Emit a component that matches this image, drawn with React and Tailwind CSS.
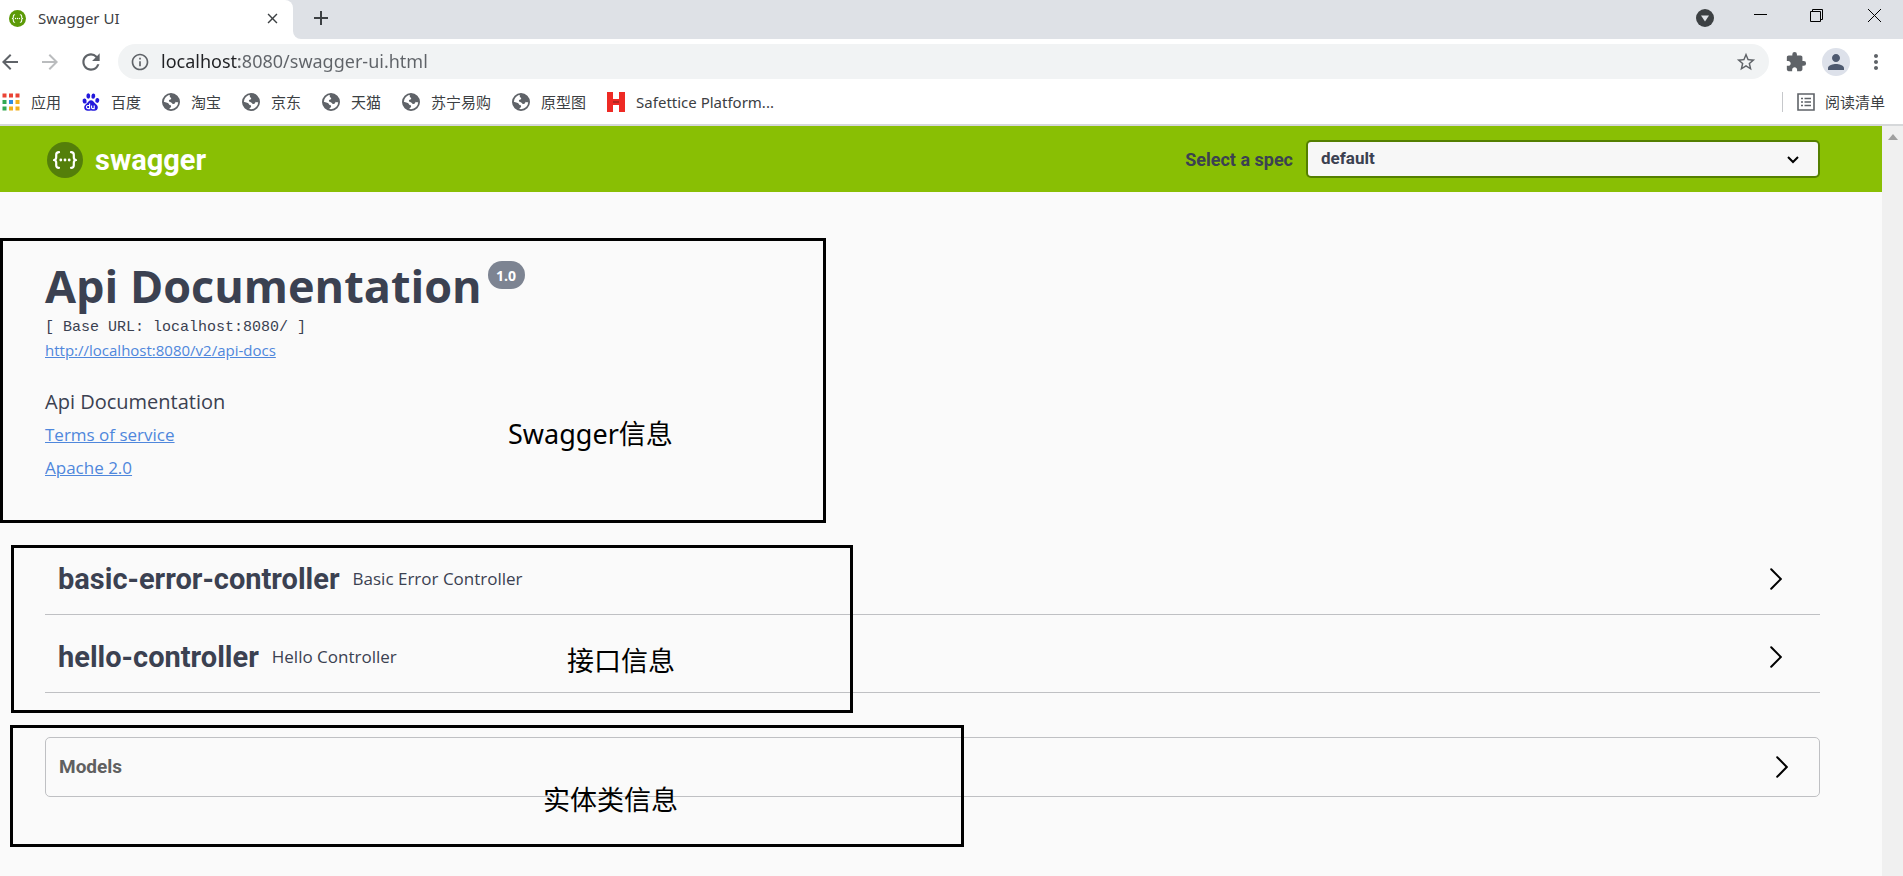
import React from "react";
import {
  MdExtension, MdPerson, MdMoreVert, MdStarBorder, MdArrowBack, MdArrowForward, MdRefresh, MdInfoOutline, MdAdd, MdClose,
} from "react-icons/md";

function Braces({ className, disc }) {
  return (
    <svg viewBox="0 0 36 36" className={className} fill="none" aria-hidden="true">
      <circle cx="18" cy="18" r="18" fill={disc} />
      <g stroke="#fff" strokeWidth="2.2" strokeLinecap="round" strokeLinejoin="round">
        <path d="M12 10.2c-2.2 0-2.8.9-2.8 2.6v2.4c0 1.7-.7 2.6-2.2 2.8 1.5.2 2.2 1.1 2.2 2.8v2.4c0 1.7.6 2.6 2.8 2.6" />
        <path d="M24 10.2c2.2 0 2.8.9 2.8 2.6v2.4c0 1.7.7 2.6 2.2 2.8-1.5.2-2.2 1.1-2.2 2.8v2.4c0 1.7-.6 2.6-2.8 2.6" />
      </g>
      <g fill="#fff"><circle cx="13.8" cy="18" r="1.4" /><circle cx="18" cy="18" r="1.4" /><circle cx="22.2" cy="18" r="1.4" /></g>
    </svg>
  );
}

function Globe() {
  return (
    <svg viewBox="0 0 18 18" className="size-[18px]" aria-hidden="true">
      <circle cx="9" cy="9" r="8.1" fill="#fff" stroke="#5f6368" strokeWidth="1.8" />
      <path fill="#5f6368" d="M8.500 1C13 .8 16.800 4 17 8.500c-1 1.200-2.200 1-3.200.3-.8.900-.8 2.200-2.300 2.300-1.300 0-1.200-1.400-2.300-1.700C7.800 9 6.700 8.800 6.900 7.600c.2-1 1.300-.9 2-1.400.6-.5.200-1.200-.4-1.600C7.600 4 7.300 2 8.500 1z" />
      <path fill="#5f6368" d="M1 8.600c1.500.6 3.400.9 4.800 1.400 1.200.4 1 1.700 2.100 2.100 1.200.3 1.600 1.100.9 2.100-.6.9-1.800 1-1.700 2.700C3.500 16 .8 13 1 8.600z" />
    </svg>
  );
}

function Apps() {
  const colors = ["#ea4335", "#ea4335", "#ea4335", "#34a853", "#2f8de4", "#f2b01e", "#34a853", "#f2b01e", "#f2b01e"];
  return (
    <svg viewBox="0 0 18 18" className="size-[18px]" aria-hidden="true">
      {colors.map((c, i) => <rect key={i} x={(i % 3) * 6.5 + 0.5} y={Math.floor(i / 3) * 6.5 + 0.5} width="4" height="4" fill={c} />)}
    </svg>
  );
}

function Paw() {
  return (
    <svg viewBox="0 0 18 18" className="size-[18px]" fill="#2319dc" aria-hidden="true">
      <ellipse cx="2.6" cy="8" rx="2" ry="2.6" transform="rotate(-12 2.6 8)" />
      <ellipse cx="6.3" cy="3" rx="1.9" ry="2.7" />
      <ellipse cx="11.3" cy="3.1" rx="1.9" ry="2.7" transform="rotate(10 11.3 3.1)" />
      <ellipse cx="15.3" cy="7.4" rx="2" ry="2.5" transform="rotate(10 15.3 7.4)" />
      <path d="M9 7.300c2 0 2.700 1.700 4 3 1.500 1.400 3 2.400 2.800 4.500-.2 2-1.700 3-3.500 2.900-1.200 0-2-.3-3.300-.3s-2.100.3-3.300.3c-1.900 0-3.300-1-3.500-2.900-.1-2.100 1.300-3.100 2.800-4.500 1.300-1.300 2-3 4-3z" />
      <path d="M7.600 10.400v5.200H5.900c-1 0-1.500-.6-1.500-1.600s.6-1.500 1.500-1.500h1.700M9.600 12.500v2c0 .8.300 1.100 1 1.100h1.600v-3.100" fill="none" stroke="#fff" strokeWidth="1.1" />
    </svg>
  );
}

function Hikvision() {
  return (
    <svg viewBox="0 0 18 20" className="h-5 w-[18px]" aria-hidden="true">
      <path fill="#ee2a24" d="M0 0h6v7h6V0h6v20h-6v-7H6v7H0z" />
      <path fill="#b3261f" d="M6 9h6v2H6z" />
    </svg>
  );
}

function ListIcon() {
  return (
    <svg viewBox="0 0 18 18" className="size-[18px]" fill="none" stroke="#5f6368" strokeWidth="1.6" aria-hidden="true">
      <path d="M1 1h16v16H1zM4 5.500h2M4 9h2M4 12.500h2M7.500 5.500H14M7.500 9H14M7.500 12.500H14" />
    </svg>
  );
}

function Chevron() {
  return (
    <svg viewBox="0 0 12 22" className="h-[22px] w-3 shrink-0" fill="none" stroke="#000" strokeWidth="2" strokeLinecap="round" aria-hidden="true">
      <path d="M1.200 1.200 10.800 11 1.200 20.800" />
    </svg>
  );
}

const bookmarks = [
  [Apps, "应用"], [Paw, "百度"], [Globe, "淘宝"], [Globe, "京东"], [Globe, "天猫"], [Globe, "苏宁易购"], [Globe, "原型图"], [Hikvision, "Safettice Platform..."],
];

const tags = [
  ["basic-error-controller", "Basic Error Controller"],
  ["hello-controller", "Hello Controller"],
];

function BrowserChrome() {
  return (
    <header className="border-b-2 border-[#d6d8da] bg-white font-['Noto_Sans','Noto_Sans_CJK_SC',sans-serif] text-[#3c4043]">
      <div className="flex h-[39px]">
        <div className="bg-[#dee1e6]">
          <div className="flex h-[39px] w-[293px] items-center rounded-tr-lg bg-white pr-3 pb-[3px] pl-[9px]">
            <Braces className="size-[17px]" disc="#5c9a08" />
            <span className="ml-3 flex-1 text-[15px]">Swagger UI</span>
            <button type="button" aria-label="Close tab"><MdClose size={17} /></button>
          </div>
        </div>
        <div className="flex flex-1 items-start rounded-bl-lg bg-[#dee1e6] pr-[22px] pl-[16px]">
          <button type="button" aria-label="New tab" className="mt-1.5"><MdAdd size={24} /></button>
          <div className="ml-auto flex items-start text-black">
            <button type="button" aria-label="Search tabs" className="mt-[9px] mr-10">
              <svg viewBox="0 0 18 18" className="size-[18px]"><circle cx="9" cy="9" r="9" fill="#3c4043" /><path d="M5 6.500h8L9 12.500z" fill="#dee1e6" /></svg>
            </button>
            <button type="button" aria-label="Minimize" className="mt-[9px] mr-[43px]">
              <svg viewBox="0 0 13 13" className="size-[13px]" stroke="currentColor"><path d="M0 5.500h13" /></svg>
            </button>
            <button type="button" aria-label="Restore" className="mt-[9px] mr-[45px]">
              <svg viewBox="0 0 13 13" className="size-[13px]" fill="none" stroke="currentColor"><path d="M.5 2.500h10v10H.5zM2.500 2.500v-2h10v10h-2" /></svg>
            </button>
            <button type="button" aria-label="Close window" className="mt-[9px]">
              <svg viewBox="0 0 13 13" className="size-[13px]" stroke="currentColor"><path d="M0 0l13 13M13 0 0 13" /></svg>
            </button>
          </div>
        </div>
      </div>
      <div className="flex h-[45px] items-center pr-[15px] text-[#5f6368]">
        <button type="button" aria-label="Back" className="-ml-[2px]"><MdArrowBack size={24} /></button>
        <button type="button" aria-label="Forward" className="ml-4 text-[#babcbe]"><MdArrowForward size={24} /></button>
        <button type="button" aria-label="Reload" className="ml-4"><MdRefresh size={26} /></button>
        <div className="ml-[14px] flex h-[35px] flex-1 items-center rounded-full bg-[#f1f3f4] px-3">
          <MdInfoOutline size={20} />
          <input
            aria-label="Address"
            defaultValue="localhost:8080/swagger-ui.html"
            className="ml-[11px] h-7 flex-1 bg-[linear-gradient(90deg,#202124_78px,#5f6368_78px)] bg-clip-text pb-0.5 text-[18px] text-transparent caret-black outline-none"
          />
          <button type="button" aria-label="Bookmark this page"><MdStarBorder size={22} /></button>
        </div>
        <button type="button" aria-label="Extensions" className="ml-4"><MdExtension size={22} /></button>
        <button type="button" aria-label="Profile" className="ml-[15px] flex size-7 items-center justify-center rounded-full bg-[#dde1ea]"><MdPerson size={24} color="#4e5a70" /></button>
        <button type="button" aria-label="Menu" className="ml-[14px]"><MdMoreVert size={24} /></button>
      </div>
      <nav className="flex h-10 items-center pr-[18px] pb-1 pl-[2px] text-[15px]">
        <div className="flex items-center gap-[21px]">
          {bookmarks.map(([Icon, label]) => (
            <a key={label} href="#" className="flex items-center gap-[11px] whitespace-nowrap"><Icon />{label}</a>
          ))}
        </div>
        <button type="button" className="ml-auto flex h-5 items-center gap-2.5 border-l border-[#c6c8cb] pl-[14px]"><ListIcon />阅读清单</button>
      </nav>
    </header>
  );
}

function Note({ box, label, children }) {
  return (
    <div className={"pointer-events-none absolute border-[3px] border-black " + box}>
      <span className={"absolute whitespace-nowrap text-[27px] leading-9 text-black font-['Noto_Sans','Noto_Sans_CJK_SC',sans-serif] " + label}>{children}</span>
    </div>
  );
}

export default function App() {
  return (
    <div className="flex min-h-screen flex-col bg-[#fafafa] font-['Open_Sans',sans-serif] text-[#3b4151]">
      <BrowserChrome />
      <div className="flex flex-1">
        <div className="relative flex-1">
          <div className="flex h-[66px] items-center justify-between bg-[#89bf04] pr-[62px] pl-[47px] font-['Roboto',sans-serif] font-bold">
            <a href="#" className="flex items-center gap-3 pt-0.5 text-white">
              <Braces className="size-9" disc="#547f0a" />
              <span className="text-[29px] leading-9">swagger</span>
            </a>
            <div className="flex items-center">
              <label htmlFor="spec" className="mr-[13px] text-[18px]">Select a spec</label>
              <div className="relative">
                <select id="spec" className="h-[38px] w-[514px] appearance-none rounded-[5px] border-2 border-[#547f00] bg-[#f7f7f7] pr-10 pl-[13px] text-[17px] font-bold">
                  <option>default</option>
                </select>
                <svg viewBox="0 0 12 8" className="pointer-events-none absolute top-4 right-[21px] h-2 w-3" fill="none" stroke="#000" strokeWidth="2"><path d="M1 1l5 5 5-5" /></svg>
              </div>
            </div>
          </div>
          <main className="pr-[62px] pb-10 pl-[45px]">
            <section className="pt-[71px]">
              <div className="flex items-start gap-[6px]">
                <h1 className="text-[45px] leading-[45px] font-bold">Api Documentation</h1>
                <span className="-mt-0.5 flex h-7 w-[37px] items-center justify-center rounded-full bg-[#7d8492] text-[14px] font-bold text-white">1.0</span>
              </div>
              <pre className="mt-2.5 text-[15px] leading-5 font-['Liberation_Mono',monospace]">[ Base URL: localhost:8080/ ]</pre>
              <a href="#" className="mt-0.5 block w-fit text-[15px] leading-5 text-[#4f87dc] underline">http://localhost:8080/v2/api-docs</a>
              <p className="mt-7 text-[20px] leading-7">Api Documentation</p>
              <a href="#" className="mt-[7px] block w-fit text-[17px] leading-6 text-[#4f87dc] underline">Terms of service</a>
              <a href="#" className="mt-[9px] block w-fit text-[17px] leading-6 text-[#4f87dc] underline">Apache 2.0</a>
            </section>
            <section className="mt-[57px]">
              {tags.map(([name, description]) => (
                <button key={name} type="button" className="flex h-[78px] w-full items-center border-b border-[#bfc0c3] pt-[6px] pr-[38px] pl-[13px] text-left">
                  <h2 className="text-[29px] leading-10 font-bold font-['Roboto',sans-serif]">{name}</h2>
                  <span className="ml-[13px] flex-1 text-[17px]">{description}</span>
                  <Chevron />
                </button>
              ))}
            </section>
            <button type="button" className="mt-11 flex h-[60px] w-full items-center justify-between rounded-[5px] border border-[#bfc0c3] pr-[31px] pl-[13px] text-[19px] font-bold text-[#606060] font-['Roboto',sans-serif]">
              Models
              <Chevron />
            </button>
          </main>
          <Note box="top-[112px] left-0 h-[285px] w-[826px]" label="top-[175px] left-[505px]">Swagger信息</Note>
          <Note box="top-[419px] left-[11px] h-[168px] w-[842px]" label="top-[95px] left-[553px]">接口信息</Note>
          <Note box="top-[599px] left-[10px] h-[122px] w-[954px]" label="top-[54px] left-[530px]">实体类信息</Note>
        </div>
        <div className="flex w-[21px] justify-center bg-[#f0f0f0] pt-2" aria-hidden="true">
          <svg viewBox="0 0 10 6" className="h-1.5 w-2.5"><path d="M5 0l5 6H0z" fill="#a0a0a0" /></svg>
        </div>
      </div>
    </div>
  );
}
